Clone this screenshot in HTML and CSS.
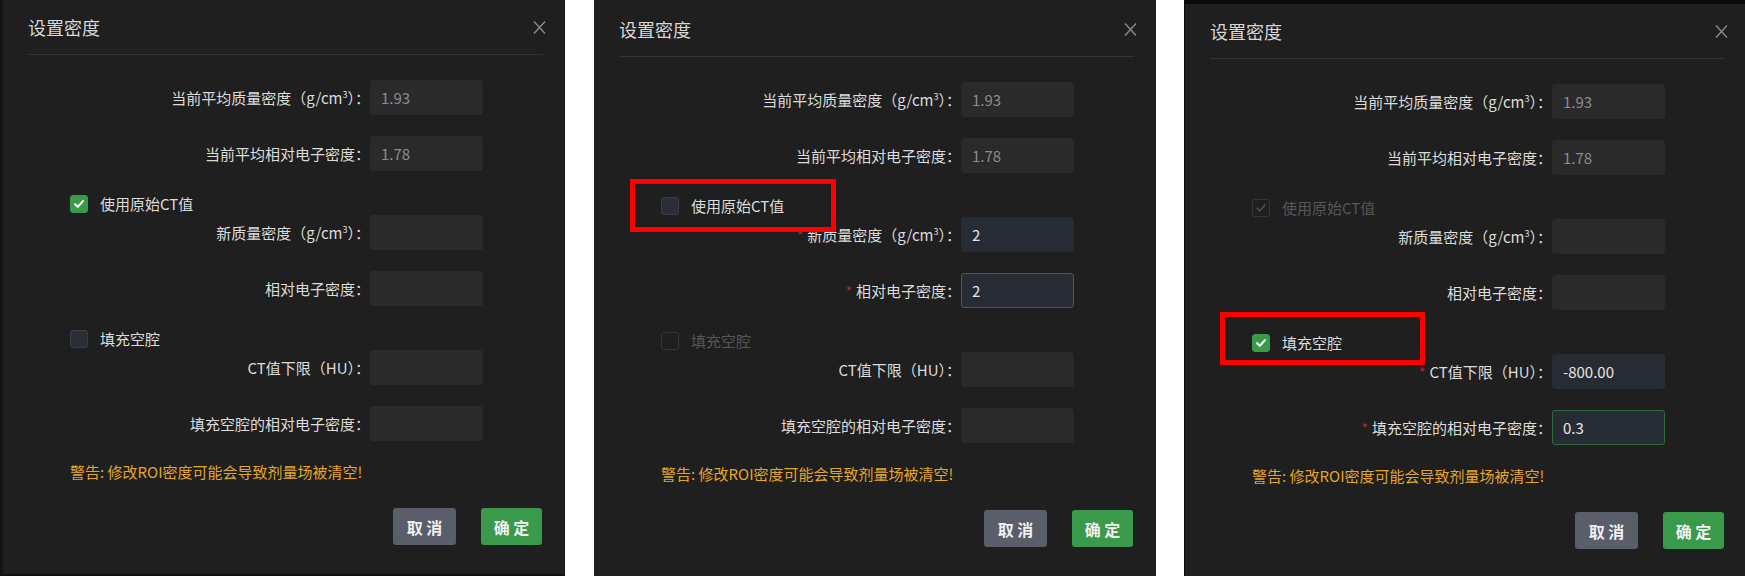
FILE: index.html
```html
<!DOCTYPE html>
<html lang="zh-CN">
<head>
<meta charset="utf-8">
<title>设置密度</title>
<link rel="stylesheet" href="styles.css">
</head>
<body>
<div class="screen">

  <section class="shot shot-1">
    <div class="dialog">
      <header class="dlg-head">
        <span class="dlg-title">设置密度</span>
        <svg class="dlg-close" viewBox="0 0 13 13"><path d="M1 0.5 L12 12.5 M12 0.5 L1 12.5"/></svg>
      </header>
      <div class="dlg-body">
        <div class="field"><label class="field-label">当前平均质量密度（g/cm<sup>3</sup>）：</label><div class="input">1.93</div></div>
        <div class="field"><label class="field-label">当前平均相对电子密度：</label><div class="input">1.78</div></div>
        <div class="check"><span class="box box-on"><svg viewBox="0 0 18 18"><path d="M4.6 9.2 L7.6 12.2 L13.4 5.8"/></svg></span><span>使用原始CT值</span></div>
        <div class="field"><label class="field-label">新质量密度（g/cm<sup>3</sup>）：</label><div class="input"></div></div>
        <div class="field"><label class="field-label">相对电子密度：</label><div class="input"></div></div>
        <div class="check"><span class="box"></span><span>填充空腔</span></div>
        <div class="field"><label class="field-label">CT值下限（HU）：</label><div class="input"></div></div>
        <div class="field"><label class="field-label">填充空腔的相对电子密度：</label><div class="input"></div></div>
        <p class="warning">警告: 修改ROI密度可能会导致剂量场被清空!</p>
      </div>
      <footer class="dlg-foot">
        <button class="btn btn-cancel">取 消</button>
        <button class="btn btn-ok">确 定</button>
      </footer>
    </div>
  </section>

  <div class="gap gap-1"></div>

  <section class="shot shot-2">
    <div class="dialog">
      <header class="dlg-head">
        <span class="dlg-title">设置密度</span>
        <svg class="dlg-close" viewBox="0 0 13 13"><path d="M1 0.5 L12 12.5 M12 0.5 L1 12.5"/></svg>
      </header>
      <div class="dlg-body">
        <div class="field"><label class="field-label">当前平均质量密度（g/cm<sup>3</sup>）：</label><div class="input">1.93</div></div>
        <div class="field"><label class="field-label">当前平均相对电子密度：</label><div class="input">1.78</div></div>
        <div class="check"><span class="box"></span><span>使用原始CT值</span></div>
        <div class="field"><label class="field-label"><span class="req">*</span>新质量密度（g/cm<sup>3</sup>）：</label><div class="input input-active">2</div></div>
        <div class="field"><label class="field-label"><span class="req">*</span>相对电子密度：</label><div class="input input-active input-focus">2</div></div>
        <div class="check check-disabled"><span class="box"></span><span>填充空腔</span></div>
        <div class="field"><label class="field-label">CT值下限（HU）：</label><div class="input"></div></div>
        <div class="field"><label class="field-label">填充空腔的相对电子密度：</label><div class="input"></div></div>
        <p class="warning">警告: 修改ROI密度可能会导致剂量场被清空!</p>
      </div>
      <footer class="dlg-foot">
        <button class="btn btn-cancel">取 消</button>
        <button class="btn btn-ok">确 定</button>
      </footer>
    </div>
    <div class="annot annot-2"></div>
  </section>

  <div class="gap gap-2"></div>

  <section class="shot shot-3">
    <div class="dialog">
      <header class="dlg-head">
        <span class="dlg-title">设置密度</span>
        <svg class="dlg-close" viewBox="0 0 13 13"><path d="M1 0.5 L12 12.5 M12 0.5 L1 12.5"/></svg>
      </header>
      <div class="dlg-body">
        <div class="field"><label class="field-label">当前平均质量密度（g/cm<sup>3</sup>）：</label><div class="input">1.93</div></div>
        <div class="field"><label class="field-label">当前平均相对电子密度：</label><div class="input">1.78</div></div>
        <div class="check check-disabled"><span class="box box-dis-on"><svg viewBox="0 0 18 18"><path d="M4.6 9.2 L7.6 12.2 L13.4 5.8"/></svg></span><span>使用原始CT值</span></div>
        <div class="field"><label class="field-label">新质量密度（g/cm<sup>3</sup>）：</label><div class="input"></div></div>
        <div class="field"><label class="field-label">相对电子密度：</label><div class="input"></div></div>
        <div class="check"><span class="box box-on"><svg viewBox="0 0 18 18"><path d="M4.6 9.2 L7.6 12.2 L13.4 5.8"/></svg></span><span>填充空腔</span></div>
        <div class="field"><label class="field-label"><span class="req">*</span>CT值下限（HU）：</label><div class="input input-active">-800.00</div></div>
        <div class="field"><label class="field-label"><span class="req">*</span>填充空腔的相对电子密度：</label><div class="input input-active input-focus">0.3</div></div>
        <p class="warning">警告: 修改ROI密度可能会导致剂量场被清空!</p>
      </div>
      <footer class="dlg-foot">
        <button class="btn btn-cancel">取 消</button>
        <button class="btn btn-ok">确 定</button>
      </footer>
    </div>
    <div class="annot annot-3"></div>
  </section>

</div>
</body>
</html>
```

FILE: styles.css
```css
* { box-sizing: border-box; }
html, body { margin: 0; padding: 0; }
body {
  width: 1745px;
  height: 576px;
  overflow: hidden;
  background: #ffffff;
  font-family: "Noto Sans CJK SC", "Noto Sans", sans-serif;
}
.screen { display: flex; height: 576px; }

.shot {
  position: relative;
  height: 576px;
  background: #1f1f1f;
  overflow: hidden;
  flex: none;
}
.shot-1 { width: 565px; border-left: 3px solid #141414; border-bottom: 2px solid #101010; }
.shot-2 { width: 562px; padding-top: 2px; }
.shot-3 { width: 561px; border-top: 4px solid #0b0b0b; border-left: 1px solid #0b0b0b; }
.gap { flex: none; background: #ffffff; }
.gap-1 { width: 29px; }
.gap-2 { width: 28px; }

.dialog { width: 562px; }

.dlg-head {
  height: 55px;
  margin: 0 22px 0 25px;
  border-bottom: 1px solid #333333;
  display: flex;
  align-items: center;
  justify-content: space-between;
}
.dlg-title { font-size: 18px; line-height: 24px; color: #d8d8d8; }
.dlg-close { width: 13px; height: 13px; margin-right: -3px; display: block; }
.dlg-close path { stroke: #8a8a8a; stroke-width: 1.4; fill: none; }

.dlg-body { padding: 25px 0 0 25px; }

.field {
  display: grid;
  grid-template-columns: 342px 113px;
  align-items: center;
  height: 35px;
  margin-bottom: 21px;
}
.field-label {
  text-align: right;
  padding-right: 0;
  font-size: 15px;
  line-height: 20px;
  color: #dcdcdc;
  white-space: nowrap;
}
.field-label sup { font-size: 9px; vertical-align: 6px; line-height: 0; }
.req { color: #b3282c; margin-right: 4px; font-size: 14px; }

.input {
  height: 35px;
  border-radius: 3px;
  background: #2a2a2a;
  border: 1px solid #2a2a2a;
  padding: 0 10px;
  display: flex;
  align-items: center;
  font-size: 15px;
  color: #8c8c8c;
}
.input-active { background: #272b33; border-color: #272b33; color: #e6e6e6; }
.input-focus { border-color: #2e6a3d; }

.check {
  display: flex;
  align-items: center;
  gap: 12px;
  height: 23px;
  padding-left: 42px;
  font-size: 15px;
  color: #dcdcdc;
}
.box {
  width: 18px;
  height: 18px;
  border-radius: 3px;
  border: 1px solid #3a3e47;
  background: #2a2e37;
  display: flex;
  align-items: center;
  justify-content: center;
  flex: none;
}
.box svg { width: 18px; height: 18px; display: block; }
.box path { fill: none; stroke: #ffffff; stroke-width: 2.4; stroke-linecap: round; stroke-linejoin: round; }
.box-on { background: #3a9a4b; border-color: #3a9a4b; }
.check-disabled { color: #565656; }
.check-disabled .box { background: #1f1f1f; border-color: #363636; }
.check-disabled .box-dis-on path { stroke: #4c4c4c; stroke-width: 1.8; }

.warning {
  margin: 4px 0 0 0;
  padding-left: 42px;
  font-size: 15px;
  line-height: 20px;
  color: #e4a627;
}

.dlg-foot {
  display: flex;
  justify-content: flex-end;
  gap: 25px;
  padding-right: 23px;
  margin-top: 26px;
}
.btn {
  height: 37px;
  border: none;
  border-radius: 3px;
  font-family: inherit;
  font-size: 16px;
  font-weight: 700;
  color: #f0f0f0;
  display: flex;
  align-items: center;
  justify-content: center;
  padding: 0;
}
.btn-cancel { width: 63px; background: #5a5d6a; }
.btn-ok { width: 61px; background: #399a4c; }

.annot {
  position: absolute;
  border: 5px solid #ff0000;
}
.annot-2 { left: 36px; top: 179px; width: 206px; height: 53px; }
.annot-3 { left: 35px; top: 308px; width: 205px; height: 53px; }
```
